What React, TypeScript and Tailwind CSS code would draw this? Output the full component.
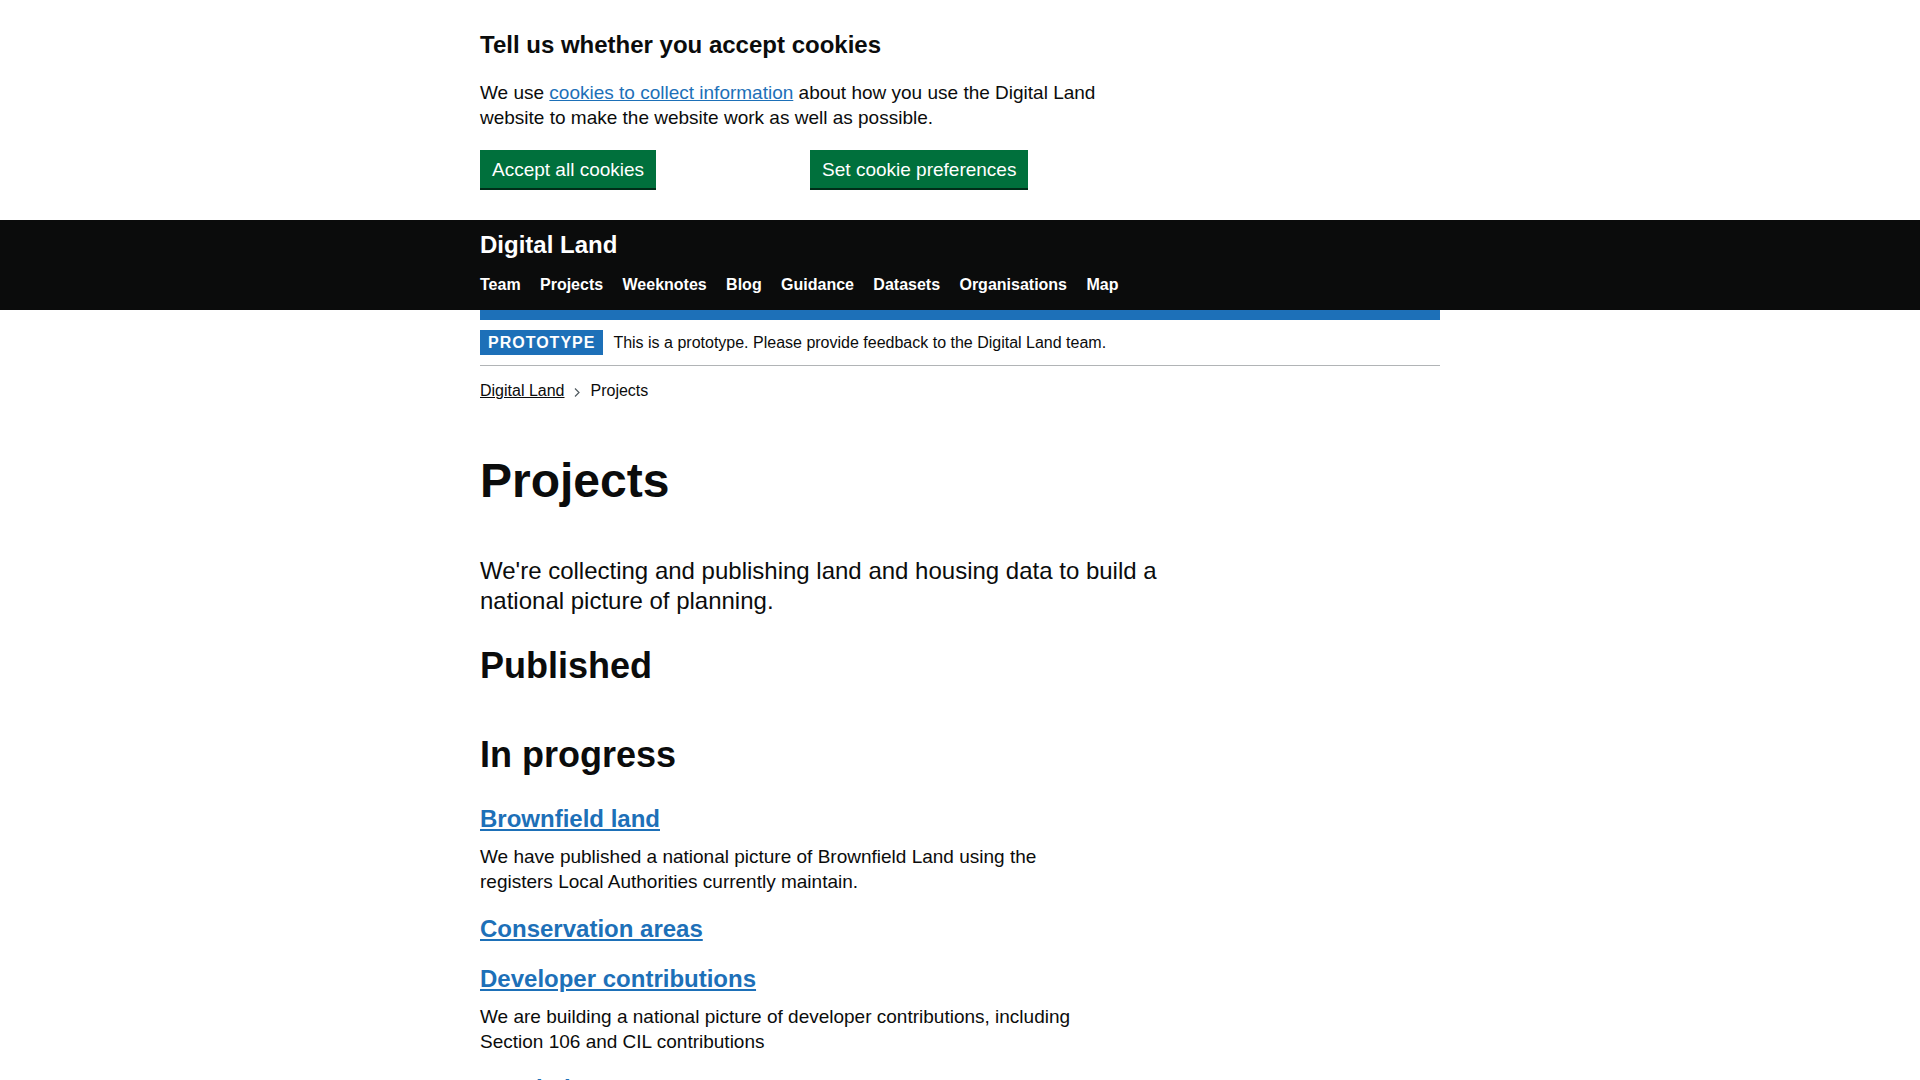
import React from "react";

const navItems = ["Team", "Projects", "Weeknotes", "Blog", "Guidance", "Datasets", "Organisations", "Map"];

const inProgress: { title: string; description?: string }[] = [
  {
    title: "Brownfield land",
    description:
      "We have published a national picture of Brownfield Land using the registers Local Authorities currently maintain.",
  },
  { title: "Conservation areas" },
  {
    title: "Developer contributions",
    description:
      "We are building a national picture of developer contributions, including Section 106 and CIL contributions",
  },
  { title: "Local plans" },
];

function CookieBanner() {
  return (
    <div className="mx-auto w-[960px] pt-[30px] pb-[32px]">
      <h2 className="text-[24px] font-bold leading-[30px]">Tell us whether you accept cookies</h2>
      <p className="mt-[20px] w-[630px] text-[19px] leading-[25px]">
        We use{" "}
        <a href="#" className="text-[#1d70b8] underline">
          cookies to collect information
        </a>{" "}
        about how you use the Digital Land website to make the website work as well as possible.
      </p>
      <div className="mt-[20px] flex items-start">
        <button className="border-2 border-transparent bg-[#00703c] px-[10px] pt-[8px] pb-[7px] text-[19px] leading-[19px] text-white shadow-[0_2px_0_#002d18]">
          Accept all cookies
        </button>
        <button className="ml-[154px] border-2 border-transparent bg-[#00703c] px-[10px] pt-[8px] pb-[7px] text-[19px] leading-[19px] text-white shadow-[0_2px_0_#002d18]">
          Set cookie preferences
        </button>
      </div>
    </div>
  );
}

function Header() {
  return (
    <header className="bg-[#0b0c0c]">
      <div className="mx-auto w-[960px] pt-[10px] pb-[15px] text-white">
        <a href="#" className="block text-[24px] font-bold leading-[30px]">
          Digital Land
        </a>
        <nav className="mt-[15px] flex gap-x-[19.4px] text-[16px] font-bold leading-[20px]">
          {navItems.map((item) => (
            <a key={item} href="#">
              {item}
            </a>
          ))}
        </nav>
      </div>
    </header>
  );
}

export default function App() {
  return (
    <div className="min-h-screen bg-white font-['Liberation_Sans',Arial,sans-serif] text-[#0b0c0c]">
      <CookieBanner />
      <Header />

      <div className="mx-auto w-[960px]">
        <div className="h-[10px] bg-[#1d70b8]" />

        <div className="flex items-center border-b border-[#b1b4b6] py-[10px]">
          <strong className="mr-[10px] bg-[#1d70b8] px-[8px] pt-[5px] pb-[4px] text-[16px] font-bold uppercase leading-[16px] tracking-[1px] text-white">
            Prototype
          </strong>
          <span className="text-[16px] leading-[20px]">
            This is a prototype. Please provide feedback to the Digital Land team.
          </span>
        </div>

        <nav className="mt-[15px] flex items-center text-[16px] leading-[20px]">
          <a href="#" className="underline">
            Digital Land
          </a>
          <svg width="6" height="9" viewBox="0 0 6 9" className="ml-[9px] mr-[11px] mt-[2px]" fill="none" stroke="#505a5f" strokeWidth="1.2">
            <path d="M1 0.5 L5 4.5 L1 8.5" />
          </svg>
          <span>Projects</span>
        </nav>

        <main className="pt-[55px]">
          <h1 className="mb-[50px] text-[48px] font-bold leading-[50px]">Projects</h1>

          <p className="mb-[30px] max-w-[712px] text-[24px] leading-[30px]">
            We're collecting and publishing land and housing data to build a national picture of planning.
          </p>

          <h2 className="mb-[49px] text-[36px] font-bold leading-[40px]">Published</h2>

          <h2 className="mb-[29px] text-[36px] font-bold leading-[40px]">In progress</h2>

          {inProgress.map((project) => (
            <div key={project.title} className="mb-[20px] flex flex-col gap-[10px]">
              <h3 className="text-[24px] font-bold leading-[30px]">
                <a href="#" className="text-[#1d70b8] underline">
                  {project.title}
                </a>
              </h3>
              {project.description && (
                <p className="w-[630px] text-[19px] leading-[25px]">{project.description}</p>
              )}
            </div>
          ))}
        </main>
      </div>
    </div>
  );
}
